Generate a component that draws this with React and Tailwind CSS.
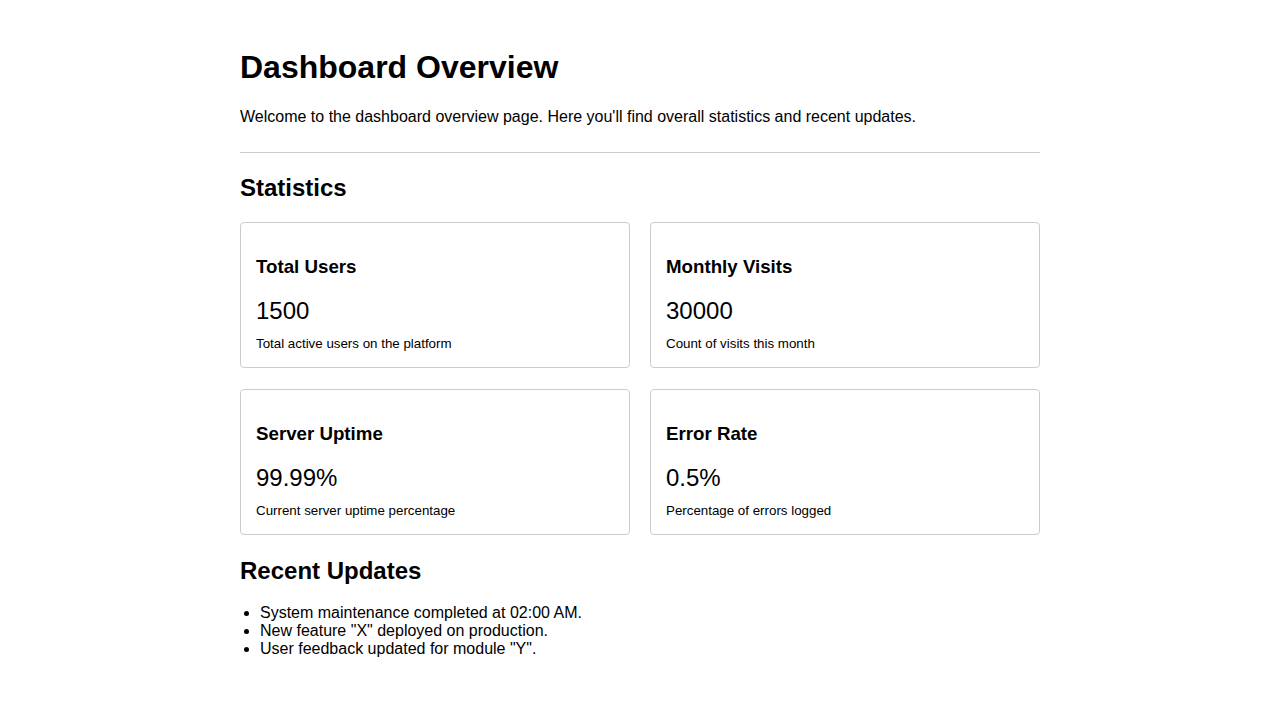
import React from "react";

const stats = [
    { title: "Total Users", value: "1500", desc: "Total active users on the platform" },
    { title: "Monthly Visits", value: "30000", desc: "Count of visits this month" },
    { title: "Server Uptime", value: "99.99%", desc: "Current server uptime percentage" },
    { title: "Error Rate", value: "0.5%", desc: "Percentage of errors logged" },
];

const updates = [
    "System maintenance completed at 02:00 AM.",
    'New feature "X" deployed on production.',
    'User feedback updated for module "Y".',
];

const StatCard = ({ title, value, desc }) => (
    <div className="border border-[#cccccc] rounded-[4px] px-[15px] pt-[16px] pb-[16px]">
        <h3 className="mt-[17px] text-[18.72px] leading-[21.5px] font-bold">{title}</h3>
        <p className="mt-[19.5px] text-[24px] leading-[27.6px]">{value}</p>
        <p className="mt-[11px] text-[13.33px] leading-[15.4px]">{desc}</p>
    </div>
);

export default function App() {
    return (
        <div className="min-h-screen bg-white text-black font-['Liberation_Sans',Arial,sans-serif]">
            <div className="w-[800px] mx-auto pt-[49px] pb-[40px]">
                {/* Header */}
                <h1 className="text-[32px] leading-[37px] font-bold">Dashboard Overview</h1>
                <p className="mt-[22px] text-[16px] leading-[18.4px]">
                    Welcome to the dashboard overview page. Here you'll find overall statistics and recent updates.
                </p>
                <hr className="mt-[26px] border-t border-[#cccccc]" />

                {/* Statistics */}
                <h2 className="mt-[21px] text-[24px] leading-[28px] font-bold">Statistics</h2>
                <div className="mt-[20px] grid grid-cols-2 gap-x-[20px] gap-y-[21px]">
                    {stats.map((s) => (
                        <StatCard key={s.title} {...s} />
                    ))}
                </div>

                {/* Recent updates */}
                <h2 className="mt-[22px] text-[24px] leading-[28px] font-bold">Recent Updates</h2>
                <ul className="mt-[19px] pl-[20px] list-disc text-[16px] leading-[18px]">
                    {updates.map((u) => (
                        <li key={u}>{u}</li>
                    ))}
                </ul>
            </div>
        </div>
    );
}
